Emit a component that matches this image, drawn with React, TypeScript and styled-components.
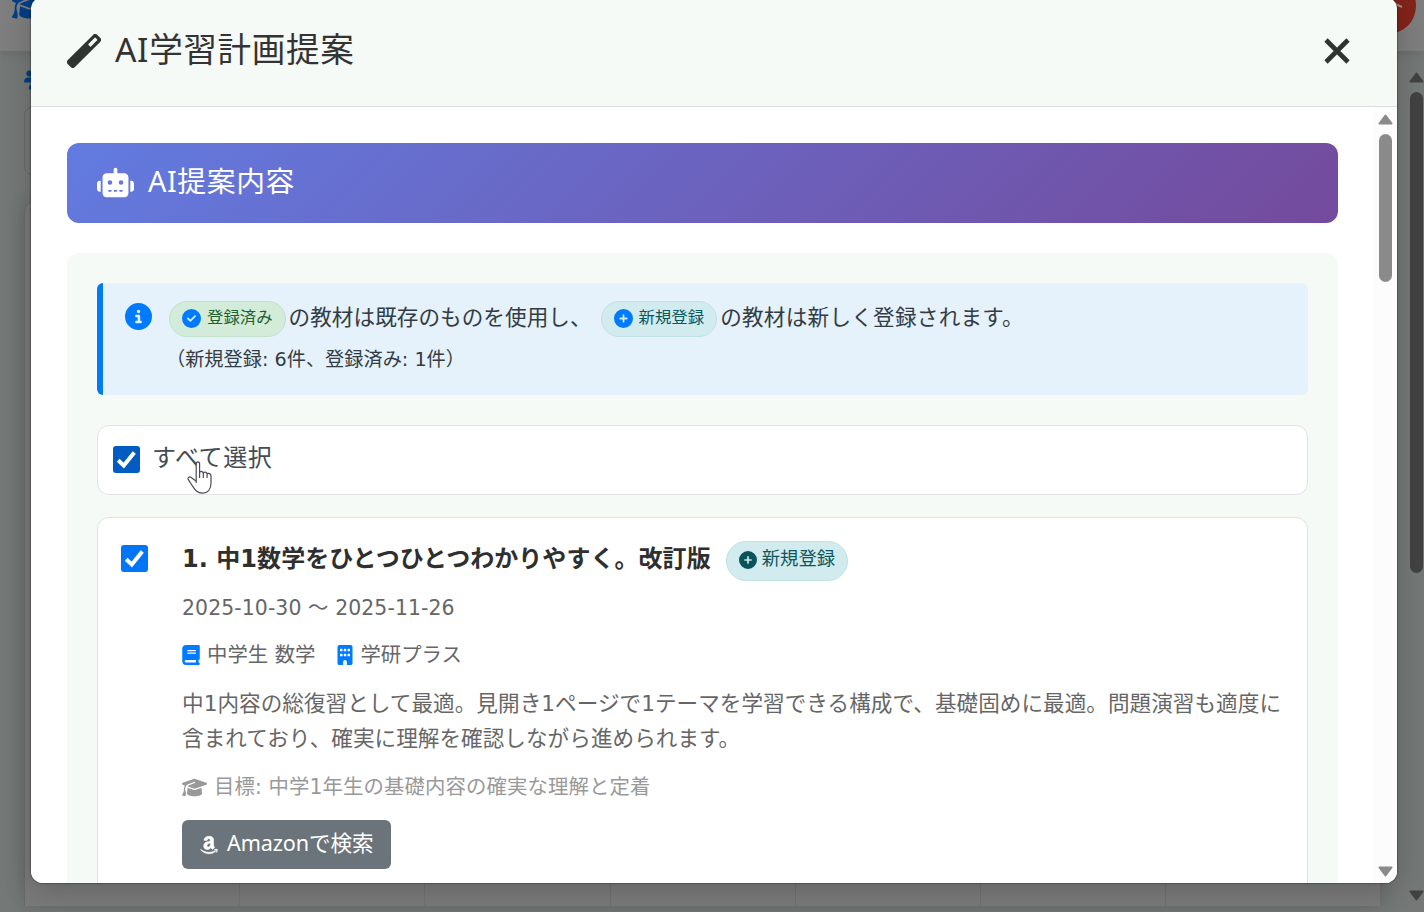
import React from "react";
import styled, { createGlobalStyle } from "styled-components";
import {
  FaRobot,
  FaCircleInfo,
  FaCircleCheck,
  FaCirclePlus,
  FaBook,
  FaBuilding,
  FaGraduationCap,
  FaAmazon,
  FaUsers,
} from "react-icons/fa6";

const GlobalStyle = createGlobalStyle`
  * { box-sizing: border-box; }
  body {
    margin: 0;
    overflow: hidden;
    font-family: "Noto Sans", "Noto Sans CJK JP", sans-serif;
    color: #333;
  }
  svg { display: block; flex: none; }
`;

const wideDigits = `font-family: "DejaVu Sans", "Noto Sans CJK JP", sans-serif;`;

const Screen = styled.div`
  position: relative;
  display: flex;
  flex-direction: column;
  width: 1424px;
  height: 912px;
  overflow: hidden;
  background: #747876;
`;

const PageHeader = styled.div`
  display: flex;
  justify-content: space-between;
  flex: none;
  height: 52px;
  padding: 0 8px 0 12px;
  background: #7e7e7e;
  border-bottom: 1px solid #6c7072;
  box-shadow: 0 2px 10px rgba(0, 0, 0, 0.1);
  color: #003f86;
`;

const HeaderLogo = styled(FaGraduationCap)`
  margin-top: -12px;
`;

const RoundButton = styled.div`
  display: flex;
  justify-content: flex-end;
  align-items: center;
  width: 56px;
  height: 56px;
  margin-top: -22px;
  padding: 0 11px 4px 0;
  border-radius: 50%;
  background: #83231a;
`;

const PageMain = styled.div`
  display: flex;
  flex: 1;
  min-height: 0;
`;

const PageContent = styled.div`
  display: flex;
  flex-direction: column;
  flex: 1;
  padding: 16px 28px 6px 24px;
  color: #003f86;
`;

const PageField = styled.div`
  height: 68px;
  margin: 15px 0 26px;
  border: 1px solid #666a69;
  border-radius: 8px;
`;

const PageTable = styled.div`
  display: grid;
  grid-template-columns: 215px repeat(5, 185.3px) 1fr;
  flex: 1;
  border-left: 1px solid #686a6a;
  border-radius: 12px 12px 0 0;
  background: #7a7a7a;
  box-shadow: 0 0 16px rgba(50, 50, 65, 0.25);
`;

const PageColumn = styled.div`
  border-right: 1px solid #707172;
`;

const Dialog = styled.div`
  position: absolute;
  left: 31px;
  top: -3px;
  display: flex;
  flex-direction: column;
  width: 1366px;
  height: 886px;
  padding-top: 3px;
  overflow: hidden;
  border-radius: 12px;
  background: #f6faf7;
  box-shadow: 0 0 2px rgba(0, 0, 0, 0.8), 0 6px 30px rgba(0, 0, 0, 0.2);
`;

const DialogHeader = styled.div`
  display: flex;
  align-items: center;
  flex: none;
  height: 107px;
  padding: 0 47px 4px 36px;
  border-bottom: 1px solid #d9dddc;
`;

const DialogTitle = styled.h1`
  flex: 1;
  margin: 0 0 4px 14px;
  font-size: 33.6px;
  font-weight: 400;
  letter-spacing: 0.65px;
  line-height: 50px;
`;

const DialogBody = styled.div`
  display: flex;
  flex: 1;
  min-height: 0;
  background: #fff;
`;

const Scroller = styled.div`
  flex: 1;
  min-width: 0;
  padding: 36px 36px 0;
  overflow: hidden;
`;

const Track = styled.div<{ $page?: boolean }>`
  display: flex;
  flex-direction: column;
  align-items: center;
  flex: none;
  width: ${(p) => (p.$page ? 16 : 23)}px;
  padding: ${(p) => (p.$page ? "20px 0 11px" : "7px 0 6px")};
  background: ${(p) => (p.$page ? "transparent" : "#fbfcfb")};
  color: ${(p) => (p.$page ? "#424242" : "#8a8a8a")};
`;

const Thumb = styled.div<{ $height: number }>`
  flex: none;
  width: 13px;
  height: ${(p) => p.$height}px;
  margin: 9px 0 auto;
  border-radius: 7px;
  background: currentColor;
`;

const Banner = styled.div`
  display: flex;
  align-items: center;
  gap: 14px;
  height: 80px;
  padding: 0 30px 2px;
  border-radius: 12px;
  background: linear-gradient(135deg, #627be0 0%, #744a9c 100%);
  color: #fff;
  font-size: 28.8px;
  letter-spacing: 0.6px;
  line-height: 44px;

  span { margin-bottom: 2px; }
`;

const Panel = styled.div`
  height: 700px;
  margin-top: 30px;
  padding: 30px;
  border-radius: 12px;
  background: #f6faf7;
`;

const Notice = styled.div`
  display: flex;
  gap: 17px;
  height: 112px;
  padding: 18px 22px;
  border-left: 6px solid #007bf5;
  border-radius: 6px;
  background: #e5f1fb;
  color: #333c43;
`;

const NoticeIcon = styled(FaCircleInfo)`
  margin-top: 2px;
  color: #007bff;
`;

const NoticeLine = styled.div`
  display: flex;
  align-items: center;
  height: 36px;
  font-size: 21.6px;
  line-height: 32px;
  white-space: pre;
`;

const NoticeText = styled.span<{ $width?: number }>`
  width: ${(p) => (p.$width ? `${p.$width}px` : "auto")};
  margin: 0 0 4px 3px;
  letter-spacing: ${(p) => (p.$width ? 0.05 : 0.26)}px;
`;

const NoticeCounts = styled.div`
  ${wideDigits}
  margin: 8px 0 0 -3px;
  font-size: 19.2px;
  line-height: 30px;
`;

const Pill = styled.span<{ $tone: "done" | "new"; $large?: boolean }>`
  display: flex;
  align-items: center;
  gap: ${(p) => (p.$large ? 5 : 6)}px;
  flex: none;
  height: ${(p) => (p.$large ? 40 : 36)}px;
  padding: 0 12px 2px;
  border: 1px solid ${(p) => (p.$tone === "done" ? "#c3e2cc" : "#c2e1e5")};
  border-radius: 20px;
  background: ${(p) => (p.$tone === "done" ? "#d3ebd9" : "#d1ebee")};
  color: ${(p) => (p.$tone === "done" ? "#1f6030" : "#0d5660")};
  font-size: ${(p) => (p.$large ? 18.36 : 16.4)}px;
  line-height: 24px;

  svg { color: ${(p) => (p.$large ? "#0a525c" : "#007bff")}; }
  span { margin-bottom: 2px; }
`;

const SelectAll = styled.label`
  display: flex;
  align-items: center;
  gap: 12px;
  height: 70px;
  margin-top: 30px;
  padding: 0 15px 2px;
  border: 1px solid #e4e2e4;
  border-radius: 12px;
  background: #fff;
`;

const SelectAllText = styled.span`
  margin-bottom: 4px;
  color: #434c55;
  font-size: 24px;
  letter-spacing: 0.6px;
  line-height: 34px;
`;

const Box = styled.span<{ $hover?: boolean }>`
  display: flex;
  align-items: center;
  justify-content: center;
  flex: none;
  width: 27px;
  height: 27px;
  border-radius: 3px;
  background: ${(p) => (p.$hover ? "#005cc0" : "#0075f6")};
`;

const Card = styled.div`
  display: flex;
  align-items: flex-start;
  gap: 34px;
  height: 500px;
  margin-top: 22px;
  padding: 23px 23px 0;
  border: 1px solid #e0e2e2;
  border-radius: 12px;
  background: #fff;

  > ${Box} { margin-top: 4px; }
`;

const CardBody = styled.div`
  ${wideDigits}
  display: flex;
  flex-direction: column;
  align-items: flex-start;
  flex: 1;
  min-width: 0;
  color: #666;
`;

const CardTitleRow = styled.div`
  display: flex;
  align-items: center;
  gap: 15px;
  height: 40px;
`;

const CardTitle = styled.h2`
  margin: 0 0 4px;
  color: #2f2f2f;
  font-size: 24px;
  font-weight: 700;
  letter-spacing: 0.05px;
  line-height: 34px;
  white-space: nowrap;
`;

const Dates = styled.div`
  margin-top: 12px;
  font-size: 20.4px;
  letter-spacing: 0.1px;
  line-height: 30px;
`;

const Meta = styled.div`
  display: flex;
  gap: 22px;
  margin-top: 17px;
  font-size: 20.4px;
  line-height: 30px;
`;

const MetaItem = styled.span<{ $iconWidth: number }>`
  display: flex;
  align-items: center;
  gap: 7px;

  svg {
    width: ${(p) => p.$iconWidth}px;
    height: 20px;
    color: #007bff;
  }
`;

const Description = styled.p`
  margin: 16px 0 0;
  font-size: 21.6px;
  letter-spacing: 0.04px;
  line-height: 35px;
  white-space: nowrap;
`;

const Goal = styled.div`
  display: flex;
  align-items: center;
  gap: 7px;
  margin-top: 16px;
  color: #999;
  font-size: 20.4px;
  letter-spacing: 0.1px;
  line-height: 30px;
`;

const SearchButton = styled.div`
  display: flex;
  align-items: center;
  gap: 9px;
  height: 49px;
  margin-top: 18px;
  padding: 0 17px 0 18px;
  border-radius: 6px;
  background: #6b747a;
  color: #fff;
  font-family: "Noto Sans", "Noto Sans CJK JP", sans-serif;
  font-size: 21.6px;
  letter-spacing: -0.1px;
  line-height: 32px;

  svg {
    width: 18px;
    height: 20px;
    stroke: currentColor;
    stroke-width: 14px;
  }
  span { margin-bottom: 4px; }
`;

const Pointer = styled.svg`
  position: absolute;
  left: 186px;
  top: 460px;
`;

const Check = () => (
  <svg width="21" height="21" viewBox="0 0 21 21">
    <path d="M2.2 11.2 L7.8 16.6 L18.3 3.6" fill="none" stroke="#fff" strokeWidth="4" />
  </svg>
);

const Wand = () => (
  <svg width="34" height="34" viewBox="0 0 34 34">
    <g transform="rotate(-45 17 17)">
      <rect x="-3.8" y="12" width="41.6" height="10" rx="3" fill="#2f3331" />
      <rect x="24.5" y="15.3" width="10" height="3.4" rx="0.6" fill="#f6faf7" />
    </g>
  </svg>
);

const Arrow = ({ down }: { down?: boolean }) => (
  <svg width="15" height="11" viewBox="0 0 15 11">
    <path
      d={down ? "M1.5 1.5H13.5L7.5 9.5Z" : "M1.5 9.5H13.5L7.5 1.5Z"}
      fill="currentColor"
      stroke="currentColor"
      strokeWidth="2"
      strokeLinejoin="round"
    />
  </svg>
);

export default function App() {
  return (
    <Screen>
      <GlobalStyle />
      <PageHeader>
        <HeaderLogo size={36} />
        <RoundButton>
          <svg width="12" height="8" viewBox="0 0 12 8">
            <path d="M0 3L9 7" stroke="#a08a86" strokeWidth="2" />
          </svg>
        </RoundButton>
      </PageHeader>
      <PageMain>
        <PageContent>
          <FaUsers size={24} />
          <PageField />
          <PageTable>
            {[0, 1, 2, 3, 4, 5].map((n) => (
              <PageColumn key={n} />
            ))}
          </PageTable>
        </PageContent>
        <Track $page>
          <Arrow />
          <Thumb $height={481} />
          <Arrow down />
        </Track>
      </PageMain>

      <Dialog>
        <DialogHeader>
          <Wand />
          <DialogTitle>AI学習計画提案</DialogTitle>
          <svg width="26" height="26" viewBox="0 0 26 26">
            <path d="M2 2L24 24M24 2L2 24" stroke="#2f3331" strokeWidth="4.6" />
          </svg>
        </DialogHeader>
        <DialogBody>
          <Scroller>
            <Banner>
              <FaRobot size={37} />
              <span>AI提案内容</span>
            </Banner>
            <Panel>
              <Notice>
                <NoticeIcon size={27} />
                <div>
                  <NoticeLine>
                    <Pill $tone="done">
                      <FaCircleCheck size={19} />
                      <span>登録済み</span>
                    </Pill>
                    <NoticeText $width={312}>の教材は既存のものを使用し、</NoticeText>
                    <Pill $tone="new">
                      <FaCirclePlus size={19} />
                      <span>新規登録</span>
                    </Pill>
                    <NoticeText>の教材は新しく登録されます。</NoticeText>
                  </NoticeLine>
                  <NoticeCounts>（新規登録: 6件、登録済み: 1件）</NoticeCounts>
                </div>
              </Notice>
              <SelectAll>
                <Box $hover>
                  <Check />
                </Box>
                <SelectAllText>すべて選択</SelectAllText>
              </SelectAll>
              <Card>
                <Box>
                  <Check />
                </Box>
                <CardBody>
                  <CardTitleRow>
                    <CardTitle>1. 中1数学をひとつひとつわかりやすく。改訂版</CardTitle>
                    <Pill $tone="new" $large>
                      <FaCirclePlus size={18} />
                      <span>新規登録</span>
                    </Pill>
                  </CardTitleRow>
                  <Dates>2025-10-30 ～ 2025-11-26</Dates>
                  <Meta>
                    <MetaItem $iconWidth={18}>
                      <FaBook />
                      中学生 数学
                    </MetaItem>
                    <MetaItem $iconWidth={16}>
                      <FaBuilding />
                      学研プラス
                    </MetaItem>
                  </Meta>
                  <Description>
                    中1内容の総復習として最適。見開き1ページで1テーマを学習できる構成で、基礎固めに最適。問題演習も適度に
                    <br />
                    含まれており、確実に理解を確認しながら進められます。
                  </Description>
                  <Goal>
                    <FaGraduationCap size={25} />
                    目標: 中学1年生の基礎内容の確実な理解と定着
                  </Goal>
                  <SearchButton>
                    <FaAmazon />
                    <span>Amazonで検索</span>
                  </SearchButton>
                </CardBody>
              </Card>
            </Panel>
          </Scroller>
          <Track>
            <Arrow />
            <Thumb $height={148} />
            <Arrow down />
          </Track>
        </DialogBody>
      </Dialog>

      <Pointer width="27" height="35" viewBox="0 0 27 35">
        <path
          d="M10.2 23 V4 C10.2 1.2 13.6 1.2 13.6 4 V13 C14 10.8 17 10.8 17.3 13.4 C18 11.4 21 11.8 21.1 14.2 C22 12.8 25 13.4 25 16 V23 C25 29.5 21.5 33.2 16.5 33.2 C11 33.2 8.8 29.5 5.8 25 L2.2 19.4 C1.2 17.4 3.5 16.4 5.2 17.4 L10.2 21.2 M13.6 13 V18 M17.3 13.4 V18 M21.1 14.2 V18"
          fill="#fff"
          stroke="#4a4a55"
          strokeWidth="1.2"
          strokeLinejoin="round"
        />
      </Pointer>
    </Screen>
  );
}
